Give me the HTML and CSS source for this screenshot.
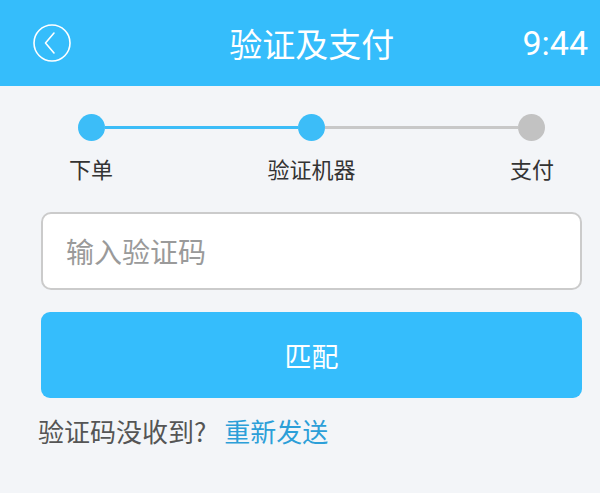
FILE: index.html
```html
<!DOCTYPE html>
<html lang="zh-CN">
<head>
<meta charset="utf-8">
<title>验证及支付</title>
<link rel="stylesheet" href="styles.css">
</head>
<body>
<header class="header">
  <span class="back">
    <svg width="38" height="38" viewBox="0 0 38 38" fill="none" stroke="#fff" stroke-width="1.6" stroke-linecap="round" stroke-linejoin="round">
      <circle cx="19" cy="19" r="18"/>
      <polyline points="21,9 12.5,19 21,29"/>
    </svg>
  </span>
  <h1 class="title">验证及支付</h1>
  <span class="time">9:44</span>
</header>
<main class="content">
  <div class="steps">
    <div class="dots">
      <span class="dot done"></span>
      <span class="line done"></span>
      <span class="dot done"></span>
      <span class="line"></span>
      <span class="dot"></span>
    </div>
    <div class="labels">
      <span class="label">下单</span>
      <span class="label">验证机器</span>
      <span class="label">支付</span>
    </div>
  </div>
  <div class="input"><input class="field" type="text" placeholder="输入验证码"></div>
  <button class="btn" type="button">匹配</button>
  <p class="note">验证码没收到?<a class="resend" href="#">重新发送</a></p>
</main>
</body>
</html>
```
FILE: styles.css
```css
html, body {
  margin: 0;
  padding: 0;
}
body {
  width: 600px;
  height: 493px;
  overflow: hidden;
  background: #f3f5f8;
  font-family: "Noto Sans CJK SC", "Noto Sans", sans-serif;
  color: #333;
}
.header {
  height: 86px;
  background: #35bdfb;
  display: flex;
  align-items: center;
  padding: 0 12px 0 33px;
  box-sizing: border-box;
}
.back {
  width: 38px;
  height: 38px;
  display: flex;
}
.title {
  flex: 1;
  margin: 0;
  padding-left: 30px;
  text-align: center;
  font-size: 33px;
  font-weight: normal;
  color: #fff;
  line-height: 40px;
}
.time {
  font-family: Roboto, "Noto Sans", sans-serif;
  font-size: 34px;
  color: #fff;
  line-height: 40px;
}
.content {
  margin: 0 18px 0 41px;
}
.steps {
  padding-top: 28px;
}
.dots {
  display: flex;
  align-items: center;
  margin: 0 37px;
}
.dot {
  width: 27px;
  height: 27px;
  border-radius: 50%;
  background: #c2c2c2;
  flex: none;
}
.dot.done {
  background: #3cbdf8;
}
.line {
  flex: 1;
  height: 3px;
  background: #c8c8c8;
}
.line.done {
  background: #3cbdf8;
}
.labels {
  display: flex;
  justify-content: space-between;
  margin-top: 12px;
}
.label {
  width: 100px;
  text-align: center;
  font-size: 22px;
  line-height: 30px;
  color: #333;
}
.input {
  margin-top: 29px;
  height: 78px;
  box-sizing: border-box;
  border: 2px solid #cbcbcb;
  border-radius: 10px;
  background: #fff;
  display: flex;
  align-items: center;
  padding-left: 23px;
}
.field {
  border: none;
  outline: none;
  background: transparent;
  font-family: "Noto Sans CJK SC", sans-serif;
  font-size: 28px;
  color: #333;
  width: 100%;
  padding: 0;
}
.field::placeholder {
  color: #9a9a9a;
}
.btn {
  display: block;
  width: 100%;
  margin-top: 22px;
  height: 86px;
  border: none;
  border-radius: 9px;
  background: #35bdfc;
  color: #fff;
  font-family: "Noto Sans CJK SC", sans-serif;
  font-size: 27px;
  padding: 0;
}
.note {
  margin: 18px 0 0 -3px;
  font-size: 26px;
  line-height: 30px;
  color: #555;
}
.resend {
  margin-left: 18px;
  color: #2c9fd8;
  text-decoration: none;
}
```
